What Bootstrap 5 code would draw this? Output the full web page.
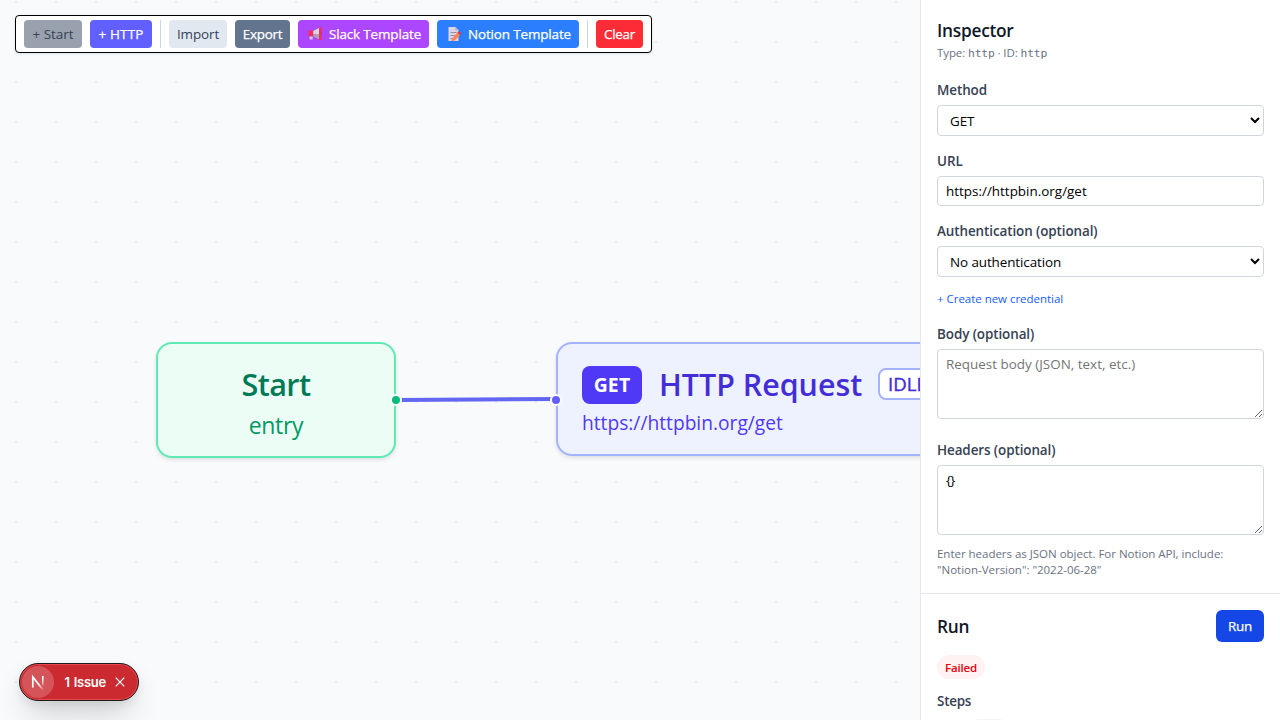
<!DOCTYPE html>
<html lang="en">
<head>
<meta charset="utf-8">
<meta name="viewport" content="width=device-width, initial-scale=1">
<title>Workflow Editor</title>
<link href="https://cdn.jsdelivr.net/npm/bootstrap@5.3.0/dist/css/bootstrap.min.css" rel="stylesheet">
<style>
body{font-family:"Open Sans","Noto Sans",sans-serif;font-size:13.44px;line-height:20px;color:#0f172b;background:#fff}
.canvas{background:#f9fafc radial-gradient(circle at 1px 1px,#e9edf1 1.4px,transparent 1.5px) 15px 1px/40px 40px;min-width:0}
.toolbar{top:15px;left:15px;width:637px;height:38px;border:1px solid #000;border-radius:4px;padding:4px 8px;gap:8px;background:#fff;box-shadow:0 1px 3px #0000001a;z-index:2}
.tool{--bs-btn-padding-x:0;--bs-btn-padding-y:4px;--bs-btn-border-width:0;--bs-btn-border-radius:4px;--bs-btn-font-size:13.44px;--bs-btn-line-height:20px;--bs-btn-color:#fff;height:28px;white-space:nowrap;flex:none;display:flex;align-items:center;justify-content:center}
.tool.med,.run-btn{-webkit-text-stroke:.25px currentColor}
.tool:disabled{--bs-btn-disabled-color:#364153;background:#99a1af;opacity:1}
.t-start{width:58px}.t-http{width:62px;background:#615fff;letter-spacing:.2px}
.t-import{width:58px;background:#e2e8f0;color:#314158;letter-spacing:-.1px}
.t-export{width:55px;background:#62748e;letter-spacing:-.3px}
.t-slack{width:131px;background:#ad46ff;letter-spacing:-.13px}
.t-notion{width:142px;background:#2b7fff;letter-spacing:-.13px}
.t-clear{width:47px;background:#fb2c36;letter-spacing:-.25px}
.tool svg{flex:none}
.sep{width:1px;background:#cad5e2;flex:none}.sep.grey{background:#d1d5dc}
.node{border:2px solid;border-radius:16px;box-shadow:0 2px 4px #0000001c}
.node-start{left:156px;top:342px;width:240px;height:116px;background:#ecfdf5;border-color:#5ee9b5;padding:20px 0}
.node-http{left:556px;top:342px;width:440px;height:114px;background:#eef2ff;border-color:#a3b3ff;padding:22px 24px}
.node-start h2{font-size:30.6px;line-height:40px;font-weight:600;color:#007a55;letter-spacing:-.6px;margin:0 0 2px}
.node-start p{font-size:23px;line-height:38px;color:#009966;letter-spacing:-.35px;margin:0}
.node-http h2{font-size:30.4px;line-height:38px;font-weight:600;color:#432dd7;letter-spacing:0;width:203px;margin:0 0 0 17px;white-space:nowrap}
.verb{width:60px;height:38px;border-radius:8px;background:#4f39f6;color:#fff;font-weight:700;font-size:19.4px;line-height:38px;letter-spacing:.2px}
.state{width:70px;height:32px;margin:-2px 0 0 16px;border:2px solid #a3b3ff;border-radius:8px;background:#fff;color:#432dd7;font-size:18.6px;line-height:28px;padding-left:8px;-webkit-text-stroke:.4px currentColor}
.node-http p{font-size:19.2px;line-height:38px;color:#4f39f6;letter-spacing:0;margin:0}
.wire{left:396px;top:390px}
.port{width:12px;height:12px;border:2px solid #fff;border-radius:50%;z-index:1}
.issue{left:19px;top:663px;width:120px;height:38px;border-radius:19px;background:#ca2a30;border:1px solid #1b1b1b;box-shadow:inset 0 0 0 1px #e5484d,0 16px 32px -8px #0000003d,0 4px 8px #00000014;color:#fff;font:600 13px/36px "Inter",sans-serif;letter-spacing:-.25px;word-spacing:.8px}
.issue .disc{width:32px;height:32px;border-radius:50%;background:#ffffff33;margin:2px 10.6px 0 2px}
.side{width:360px;border-left:1px solid #e5e7eb;background:#fff;flex:none}
.inspector{height:594px;border-bottom:1px solid #e5e7eb;padding:17px 16px 0}
.side h1,.side .run-title{font-size:17.3px;line-height:28px;font-weight:600;letter-spacing:-.25px;margin:0;color:#101828}
.side .run-title{padding-top:2px}
.meta,.hint{font-size:11.5px;line-height:16px;color:#6a7282}
.meta{height:16px;letter-spacing:-.1px}.meta code{font:11.3px/16px "DejaVu Sans Mono",monospace;color:#6a7282;letter-spacing:-.15px}
.hint{margin:11px 0 0;letter-spacing:-.02px}
.field-label{display:block;font-size:13.44px;line-height:20px;font-weight:600;color:#364153;letter-spacing:-.09px;margin:0 0 5px}
.side .form-control,.side .form-select{font-size:13.44px;line-height:20px;color:#000;border:1px solid #d1d5dc;border-radius:4px;padding:4px 8px;letter-spacing:0;background-color:#fff;display:block}
.side .form-select{appearance:auto;background-image:none;height:31px;letter-spacing:-.1px}
.side input.form-control{height:30px}
.side textarea.form-control{height:70px}
.side .form-control::placeholder{color:#757575;opacity:1}
.side .braces{letter-spacing:-.8px}
.gap-field{margin-bottom:15px}
.cred{display:block;font-size:11.5px;line-height:16px;color:#155dfc;margin:14px 0 17px;text-decoration:none;letter-spacing:-.03px}
.run-btn{--bs-btn-border-width:0;--bs-btn-padding-x:0;--bs-btn-padding-y:0;--bs-btn-font-size:13.44px;width:48px;height:32px;border-radius:6px;background:#1447e6;color:#fff;letter-spacing:-.2px}
.pill{display:inline-block;width:48px;height:24px;border-radius:12px;background:#fef2f2;color:#e7000b;font-size:11.5px;line-height:25px;font-weight:600;letter-spacing:-.15px;text-align:center}
.steps{color:#364153;font-weight:600;font-size:13.44px;letter-spacing:-.25px;margin-top:12px}
.step-chip{width:28px;height:16px;border-radius:4px;background:#f3f4f6;margin:8px 0 0 38px}
</style>
</head>
<body>
<div class="d-flex vh-100 overflow-hidden">
  <main class="canvas position-relative flex-grow-1 overflow-hidden">
    <div class="toolbar position-absolute d-flex align-items-stretch">
      <button class="btn tool t-start" disabled>+ Start</button>
      <button class="btn tool med t-http">+ HTTP</button>
      <span class="sep"></span>
      <button class="btn tool t-import">Import</button>
      <button class="btn tool med t-export">Export</button>
      <button class="btn tool med t-slack"><svg class="me-1" width="19" height="16" viewBox="0 0 19 16"><path fill="#d9d5df" d="M7 5 14 1.5v12L7 10z"/><path fill="#aaa1b5" d="M7 8h7v5.5L7 10z"/><path fill="#f32e5e" d="M2.5 4.5h4.7v6H2.5zM13 1.2h2.6v13H13z"/><path fill="#533c65" d="M15.6 5.8q1.2 1.7 0 3.5z"/><path fill="#d4cce0" d="M3.5 10.5h3.2v3H4.5q-1 0-1-1z"/></svg>Slack Template</button>
      <button class="btn tool med t-notion"><svg class="me-1" width="19" height="16" viewBox="0 0 19 16"><path fill="#dcd5e5" d="M3.5 1h7L13.5 4v11h-10z"/><path fill="#b4acbc" d="M10.3 1v3.3h3.2z"/><path stroke="#998ea4" d="M5.5 6.5h6M5.5 9.5h6M5.5 12.5h2"/><path fill="#ff8257" d="m7 12.5 5.5-6 2.6 2.5-5.5 5.5-3.2.6z"/><path fill="#f8312f" d="m12.4 6.5 1-1q1.7 0 2.7 2.3L15 9z"/></svg>Notion Template</button>
      <span class="sep grey"></span>
      <button class="btn tool med t-clear">Clear</button>
    </div>

    <svg class="wire position-absolute" width="160" height="20"><path d="M0 10C70 10 90 9 160 9" fill="none" stroke="#6366f1" stroke-width="4"/></svg>
    <section class="node node-start position-absolute text-center">
      <h2>Start</h2><p>entry</p>
    </section>
    <section class="node node-http position-absolute">
      <div class="d-flex align-items-center"><span class="verb text-center">GET</span><h2>HTTP Request</h2><span class="state">IDLE</span></div>
      <p>https://httpbin.org/get</p>
    </section>
    <i class="port position-absolute" style="left:390px;top:394px;background:#00bc7d"></i>
    <i class="port position-absolute" style="left:550px;top:394px;background:#615fff"></i>

    <div class="issue position-absolute d-flex">
      <span class="disc d-flex align-items-center justify-content-center"><svg width="32" height="32" viewBox="0 0 32 32" fill="none"><defs><linearGradient id="fade" x1="0" y1="9" x2="0" y2="22" gradientUnits="userSpaceOnUse"><stop offset=".25" stop-color="#fff"/><stop offset="1" stop-color="#fff" stop-opacity="0"/></linearGradient><linearGradient id="tail" x1="17" y1="18" x2="22" y2="24" gradientUnits="userSpaceOnUse"><stop stop-color="#fff"/><stop offset="1" stop-color="#fff" stop-opacity="0"/></linearGradient></defs><path d="M10.8 21.5V11L21.5 24.5" stroke="url(#tail)" stroke-width="1.7"/><path d="M20.8 10v9.5" stroke="url(#fade)" stroke-width="1.6"/></svg></span>
      <span>1 Issue</span>
      <svg class="ms-2 align-self-center" width="12" height="12" viewBox="0 0 12 12"><path d="m1.7 1.7 8.6 8.6m0-8.6-8.6 8.6" stroke="#fff" stroke-width="1.2"/></svg>
    </div>
  </main>

  <aside class="side d-flex flex-column">
    <section class="inspector flex-shrink-0">
      <h1>Inspector</h1>
      <div class="meta">Type: <code>http</code> · ID: <code>http</code></div>
      <label class="field-label" style="margin-top:19px">Method</label>
      <select class="form-select gap-field"><option>GET</option></select>
      <label class="field-label">URL</label>
      <input class="form-control gap-field" value="https://httpbin.org/get">
      <label class="field-label">Authentication (optional)</label>
      <select class="form-select"><option>No authentication</option></select>
      <a class="cred" href="#">+ Create new credential</a>
      <label class="field-label">Body (optional)</label>
      <textarea class="form-control" placeholder="Request body (JSON, text, etc.)"></textarea>
      <label class="field-label" style="margin-top:21px">Headers (optional)</label>
      <textarea class="form-control braces">{}</textarea>
      <p class="hint">Enter headers as JSON object. For Notion API, include:<br>"Notion-Version": "2022-06-28"</p>
    </section>
    <section class="px-3 pt-3 flex-shrink-0">
      <div class="d-flex justify-content-between align-items-center"><h2 class="run-title">Run</h2><button class="btn run-btn">Run</button></div>
      <div style="margin-top:13px;height:24px"><span class="pill">Failed</span></div>
      <div class="steps">Steps</div>
      <div class="step-chip"></div>
    </section>
  </aside>
</div>
<script src="https://cdn.jsdelivr.net/npm/bootstrap@5.3.0/dist/js/bootstrap.bundle.min.js"></script>
</body>
</html>
